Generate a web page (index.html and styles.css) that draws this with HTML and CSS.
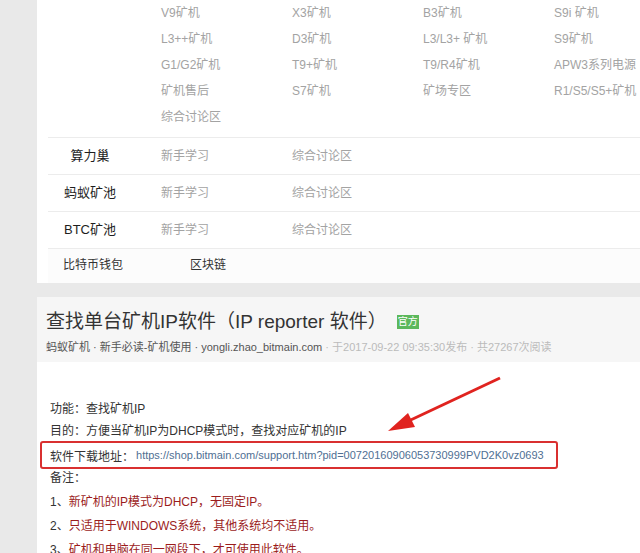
FILE: index.html
```html
<!DOCTYPE html>
<html lang="zh-CN">
  <head>
    <meta charset="UTF-8" />
    <meta name="viewport" content="width=device-width, initial-scale=1.0" />
    <title>查找单台矿机IP软件</title>
    <link rel="stylesheet" href="styles.css">
  </head>
  <body>
    <div class="panel nav">
      <div class="nav-block">
        <div class="nav-grid">
          <span class="label"></span>
          <a>V9矿机</a><a>X3矿机</a><a>B3矿机</a><a>S9i 矿机</a>
          <span class="label"></span>
          <a>L3++矿机</a><a>D3矿机</a><a>L3/L3+ 矿机</a><a>S9矿机</a>
          <span class="label"></span>
          <a>G1/G2矿机</a><a>T9+矿机</a><a>T9/R4矿机</a><a>APW3系列电源</a>
          <span class="label"></span>
          <a>矿机售后</a><a>S7矿机</a><a>矿场专区</a><a>R1/S5/S5+矿机</a>
          <span class="label"></span>
          <a>综合讨论区</a><a></a><a></a><a></a>
        </div>
      </div>
      <div class="nav-row">
        <span class="label">算力巢</span><a>新手学习</a><a>综合讨论区</a>
      </div>
      <div class="nav-row">
        <span class="label">蚂蚁矿池</span><a>新手学习</a><a>综合讨论区</a>
      </div>
      <div class="nav-row">
        <span class="label">BTC矿池</span><a>新手学习</a><a>综合讨论区</a>
      </div>
      <div class="nav-foot">
        <span>比特币钱包</span><span>区块链</span>
      </div>
    </div>

    <div class="panel post">
      <div class="post-head">
        <h1>查找单台矿机IP软件（IP reporter 软件）<span class="badge">官方</span></h1>
        <p class="meta">蚂蚁矿机 · 新手必读-矿机使用 · yongli.zhao_bitmain.com <span class="muted">· 于2017-09-22 09:35:30发布 · 共27267次阅读</span></p>
      </div>
      <div class="post-body">
        <p>功能：查找矿机IP</p>
        <p>目的：方便当矿机IP为DHCP模式时，查找对应矿机的IP</p>
        <p class="boxed">软件下载地址：<a>https://shop.bitmain.com/support.htm?pid=00720160906053730999PVD2K0vz0693</a></p>
        <p class="after-box">备注：</p>
        <p class="item">1、<span class="note">新矿机的IP模式为DHCP，无固定IP。</span></p>
        <p class="item">2、<span class="note">只适用于WINDOWS系统，其他系统均不适用。</span></p>
        <p class="item">3、<span class="note">矿机和电脑在同一网段下，才可使用此软件。</span></p>
      </div>
      <svg class="arrow" width="130" height="64" viewBox="0 0 130 64">
        <line x1="120" y1="3" x2="20" y2="50" stroke="#e0231f" stroke-width="3" />
        <polygon points="8,56 28,38 35,52" fill="#e0231f" />
      </svg>
    </div>
  </body>
</html>
```

FILE: styles.css
```css
body {
  margin: 0;
  background-color: #e9e9e9;
  font-family: "Liberation Sans", "Noto Sans CJK SC", sans-serif;
  font-size: 12px;
  color: #333333;
  overflow: hidden;
}

.panel {
  margin-left: 37px;
  background-color: #ffffff;
}

.nav {
  margin-top: -2px;
  padding-left: 11px;
  height: 285px;
}

.nav a {
  color: #a3a3a3;
}

.label {
  width: 84px;
  margin-right: 29px;
  text-align: center;
  color: #1e1e1e;
  font-size: 13px;
}

.nav-block {
  padding-bottom: 9px;
  border-bottom: 1px solid #ececec;
}

.nav-grid {
  display: grid;
  grid-template-columns: 113px repeat(4, 131px);
  grid-auto-rows: 26px;
  align-items: center;
}

.nav-row {
  display: flex;
  align-items: center;
  height: 32px;
  padding-bottom: 4px;
  border-bottom: 1px solid #ececec;
}

.nav-row a {
  width: 131px;
}

.nav-foot {
  display: flex;
  align-items: center;
  height: 28px;
  padding: 0 0 6px 15px;
  background-color: #fcfcfc;
}

.nav-foot span {
  width: 127px;
}

.post {
  position: relative;
  margin-top: 14px;
  height: 300px;
}

.post-head {
  background-color: #f6f6f6;
  padding: 12px 9px 0;
  height: 53px;
}

h1 {
  margin: 0;
  font-size: 19px;
  font-weight: normal;
  color: #333333;
  line-height: 26px;
}

.badge {
  display: inline-block;
  margin-left: 10px;
  padding: 0 1px;
  background-color: #5cb85c;
  color: #ffffff;
  font-size: 10px;
  line-height: 14px;
  vertical-align: 3px;
}

.meta {
  margin: 5px 0 0;
  font-size: 11px;
  line-height: 14px;
  color: #555555;
}

.muted {
  color: #bbbbbb;
}

.post-body {
  padding: 34px 0 0 13px;
}

.post-body p {
  margin: 0;
  height: 22px;
  display: flex;
  align-items: center;
  color: #333333;
  white-space: nowrap;
}

.boxed {
  margin: 1px 0 0 -10px !important;
  width: 506px;
  height: 24px !important;
  padding-left: 8px;
  border: 2px solid #d93030;
  border-radius: 3px;
}

.boxed a {
  margin-left: 2px;
  color: #4f6f93;
  font-size: 11px;
}

.after-box {
  margin-top: -4px !important;
}

.item {
  margin-top: 2px !important;
}

.note {
  color: #9b1c1c;
}

.arrow {
  position: absolute;
  left: 343px;
  top: 78px;
}
```
